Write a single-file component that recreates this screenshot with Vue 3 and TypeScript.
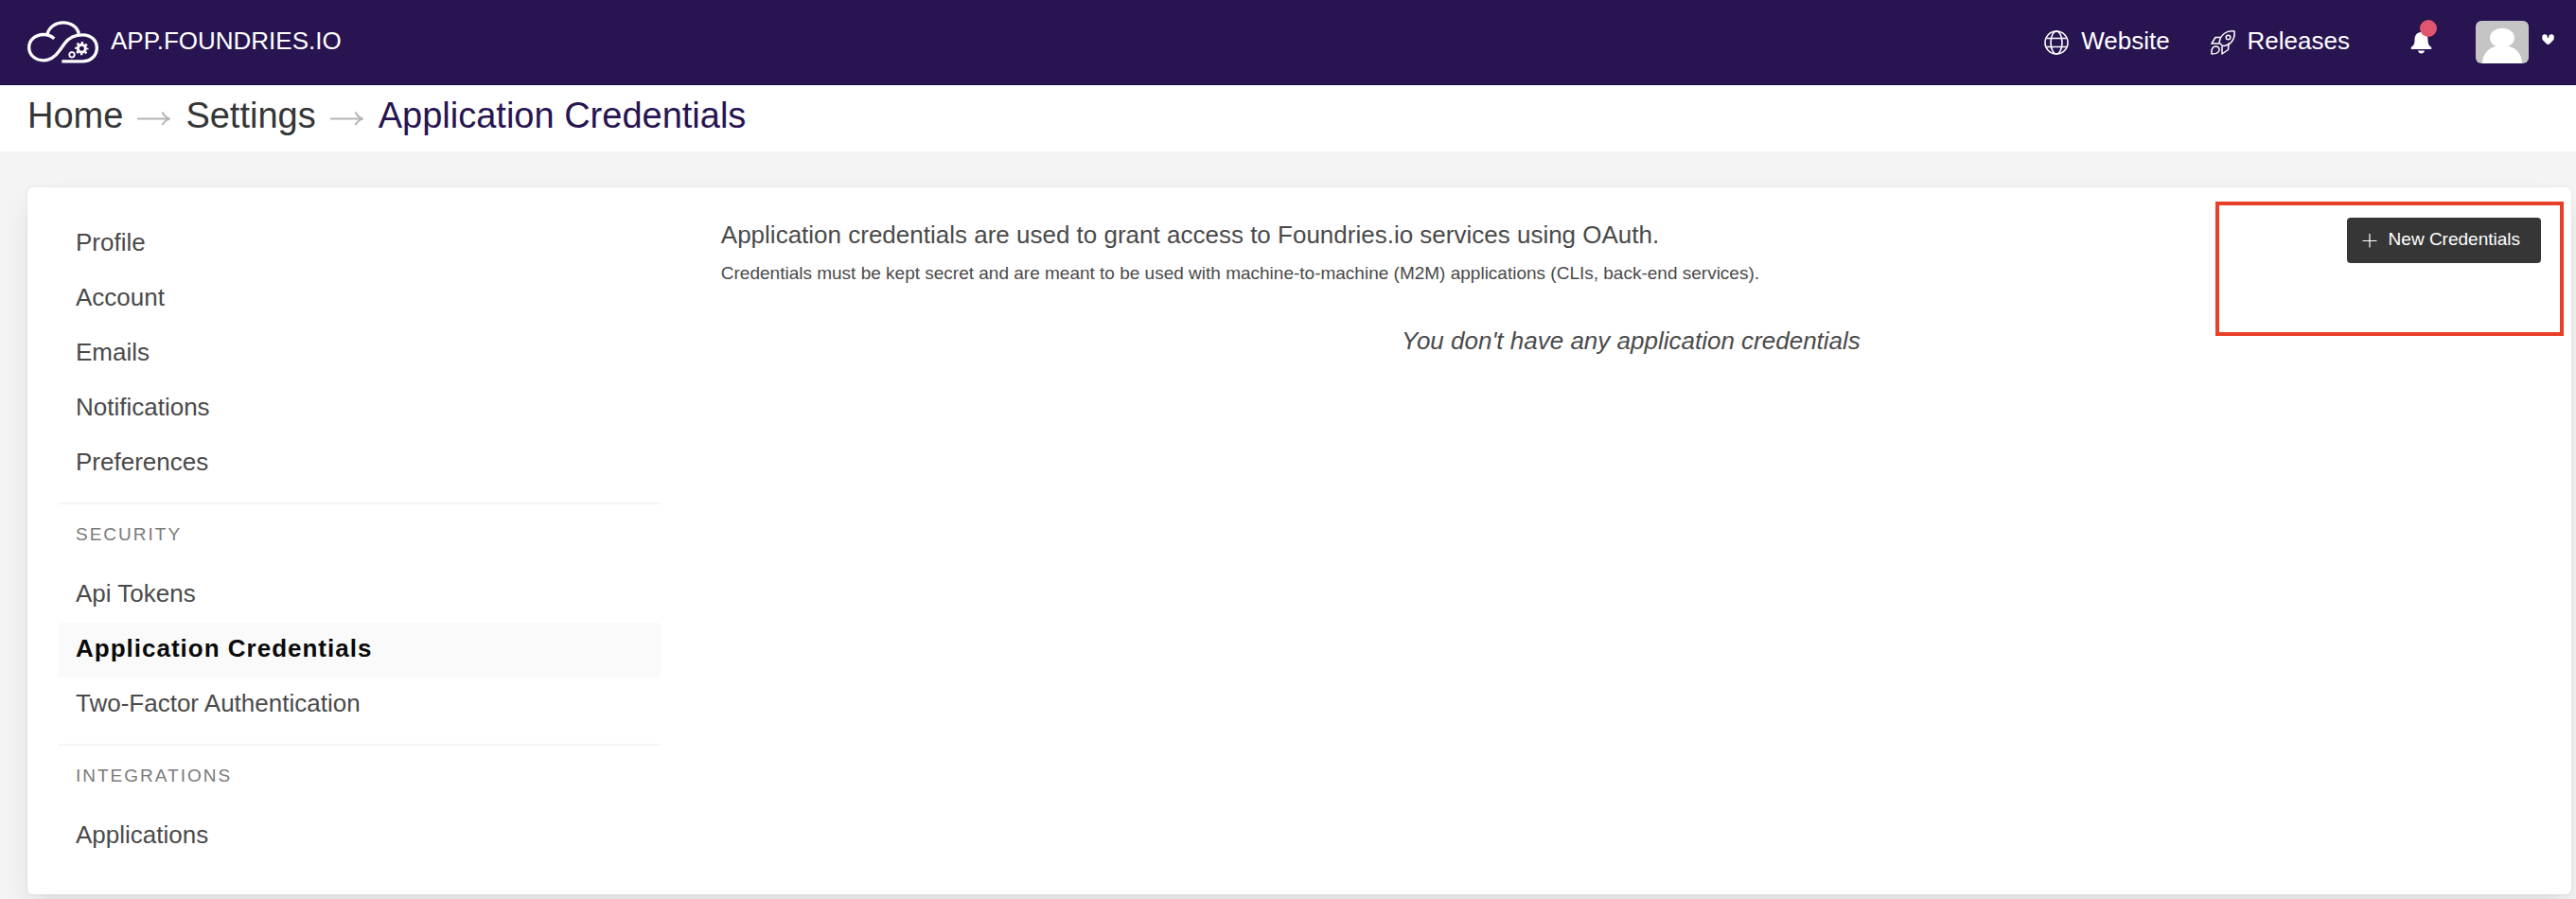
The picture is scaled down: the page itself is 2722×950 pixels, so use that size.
<script setup lang="ts">
interface NavItem {
  label: string
  active?: boolean
}

interface NavSection {
  heading?: string
  items: NavItem[]
}

const sections: NavSection[] = [
  {
    items: [
      { label: 'Profile' },
      { label: 'Account' },
      { label: 'Emails' },
      { label: 'Notifications' },
      { label: 'Preferences' },
    ],
  },
  {
    heading: 'Security',
    items: [
      { label: 'Api Tokens' },
      { label: 'Application Credentials', active: true },
      { label: 'Two-Factor Authentication' },
    ],
  },
  {
    heading: 'Integrations',
    items: [{ label: 'Applications' }],
  },
]

const crumbs: string[] = ['Home', 'Settings', 'Application Credentials']
</script>

<template>
  <div class="page">
    <header class="topbar">
      <a class="brand" href="#">
        <svg class="brand-logo" viewBox="87 68 225 134" fill="none" stroke="#fff" aria-hidden="true">
          <g stroke-width="10">
            <path d="M172 124C161 113 149 111 138 111C111 111 92 130 92 152C92 175 112 193 138 193C162 193 176 180 188 163L206 138C220 119 240 112 262 112C289 112 307 130 307 153C307 178 288 196 262 196H196" />
            <path d="M150 110C155 88 176 73 200 73C225 73 246 88 250 109" />
          </g>
          <circle cx="259" cy="155" r="12" stroke-width="9" />
          <circle cx="259" cy="155" r="18" stroke-width="7" pathLength="16" stroke-dasharray="1 1" stroke-dashoffset="0.5" />
          <circle cx="228" cy="175" r="8" stroke-width="5" />
          <circle cx="228" cy="175" r="10" stroke-width="3" pathLength="16" stroke-dasharray="1 1" stroke-dashoffset="0.5" />
        </svg>
        <span class="bar-text">APP.FOUNDRIES.IO</span>
      </a>

      <nav class="topnav" aria-label="Main">
        <a class="toplink" href="#">
          <svg class="icon" viewBox="0 0 26 26" fill="none" stroke="#fff" stroke-width="1.6" aria-hidden="true">
            <circle cx="13" cy="13" r="12" />
            <ellipse cx="13" cy="13" rx="6" ry="12" />
            <path d="M2.5 8.5H23.5M2.5 17.5H23.5" />
          </svg>
          <span class="bar-text">Website</span>
        </a>
        <a class="toplink" href="#">
          <svg class="icon" viewBox="0 0 26 26" fill="none" stroke="#fff" stroke-width="1.5" stroke-linejoin="round" aria-hidden="true">
            <path d="M25 1C17 0 10.5 4 9 13L12.5 16.5C21 16 26 10 25 1Z" />
            <circle cx="18.5" cy="7.5" r="2.3" />
            <path d="M11 7.5H5L1 14H9" />
            <path d="M12 17V25L18.5 20.5L19 13.5" />
            <path d="M1 25C.5 20 2 17 5 17C8 17 9.5 19 9 21C8.5 24 5 25 1 25Z" />
          </svg>
          <span class="bar-text">Releases</span>
        </a>
        <button class="bell" type="button" aria-label="Notifications">
          <svg class="bell-icon" viewBox="0 0 24 24" fill="#fff" aria-hidden="true">
            <path d="M11.5 1C6.5 1 4.500 5 4.500 9C4.500 14 3 15.500 1.300 16.500C.3 17.200 .2 19 1.500 19H21.500C22.800 19 22.700 17.200 21.700 16.500C20 15.500 18.500 14 18.500 9C18.500 5 16.500 1 11.500 1Z" />
            <path d="M8 20.500H15C14.500 22.500 13.500 23.500 11.500 23.500C9.500 23.500 8.500 22.500 8 20.500Z" />
          </svg>
          <span class="bell-dot"></span>
        </button>
        <button class="account" type="button" aria-label="Account menu">
          <svg class="avatar" viewBox="0 0 56 45" aria-hidden="true">
            <rect width="56" height="45" fill="#c5c5c5" />
            <ellipse cx="28" cy="18" rx="13" ry="10.3" fill="#fff" />
            <path d="M7 45C7 34 15 26 28 26C41 26 49 34 49 45Z" fill="#fff" />
          </svg>
          <svg class="caret" viewBox="0 0 13 11" aria-hidden="true">
            <path d="M3 3V4.500L6.500 8L10 4.500V3" fill="none" stroke="#fff" stroke-width="5.5" stroke-linecap="round" stroke-linejoin="round" />
          </svg>
        </button>
      </nav>
    </header>

    <nav class="crumbs" aria-label="Breadcrumb">
      <template v-for="(crumb, i) in crumbs" :key="crumb">
        <svg v-if="i > 0" class="crumb-arrow" viewBox="0 0 36 16" fill="none" stroke="#b5b5b5" stroke-width="2" aria-hidden="true">
          <path d="M0 8.5H34" />
          <path d="M26.5 1.500C28.500 5.500 30.500 7.500 34.500 8.500C30.500 9.500 28.500 11.500 26.500 15" />
        </svg>
        <a class="crumb" :class="{ current: i === crumbs.length - 1 }" href="#">{{ crumb }}</a>
      </template>
    </nav>

    <div class="card">
      <nav class="side" aria-label="Settings">
        <section v-for="(section, i) in sections" :key="i" class="side-section">
          <h2 v-if="section.heading" class="side-heading">{{ section.heading }}</h2>
          <ul class="side-list">
            <li v-for="item in section.items" :key="item.label">
              <a class="side-link" :class="{ active: item.active }" href="#">{{ item.label }}</a>
            </li>
          </ul>
        </section>
      </nav>

      <main class="main">
        <div class="intro">
          <div>
            <p class="lead">Application credentials are used to grant access to Foundries.io services using OAuth.</p>
            <p class="note">Credentials must be kept secret and are meant to be used with machine-to-machine (M2M) applications (CLIs, back-end services).</p>
          </div>
          <div class="action">
            <button class="new-button" type="button">
              <svg class="plus" viewBox="0 0 16 16" stroke="#fff" stroke-width="1.2" aria-hidden="true">
                <path d="M8 1V15.5M.5 8.5H15.5" />
              </svg>
              <span>New Credentials</span>
            </button>
            <span class="highlight"></span>
          </div>
        </div>
        <p class="empty">You don't have any application credentials</p>
      </main>
    </div>
  </div>
</template>

<style>
body {
  margin: 0;
  background: #f4f4f4;
}
</style>

<style scoped>
.page {
  box-sizing: border-box;
  min-height: 100vh;
  padding-bottom: 5px;
  overflow: hidden;
  color: #4a4a4a;
  font-family: "Liberation Sans", Arial, Helvetica, sans-serif;
  font-size: 26px;
}

a {
  color: inherit;
  text-decoration: none;
}

button {
  padding: 0;
  border: 0;
  background: none;
  color: inherit;
  font: inherit;
  cursor: pointer;
}

p,
h2,
ul {
  margin: 0;
  padding: 0;
}

.topbar {
  box-sizing: border-box;
  display: flex;
  align-items: center;
  justify-content: space-between;
  height: 90px;
  padding: 0 23px 0 29px;
  border-bottom: 1px solid #1f0d47;
  background: #281451;
  color: #fff;
}

.brand,
.topnav,
.toplink,
.account {
  display: flex;
  align-items: center;
}

.brand {
  gap: 13px;
}

.brand-logo {
  width: 75px;
  height: 45px;
}

.bar-text {
  padding-bottom: 4px;
  line-height: 32px;
}

.toplink {
  gap: 13px;
  margin-right: 43px;
}

.icon {
  width: 26px;
  height: 26px;
}

.bell {
  position: relative;
  display: flex;
  margin: 0 45px 0 21px;
}

.bell-icon {
  width: 24px;
  height: 24px;
}

.bell-dot {
  position: absolute;
  top: -12px;
  right: -4px;
  width: 18px;
  height: 18px;
  border-radius: 50%;
  background: #e0566e;
}

.account {
  gap: 14px;
}

.avatar {
  width: 56px;
  height: 45px;
  border-radius: 6px;
}

.caret {
  width: 13px;
  height: 11px;
  margin-bottom: 6px;
}

.crumbs {
  box-sizing: border-box;
  display: flex;
  align-items: center;
  gap: 15px;
  height: 70px;
  padding: 0 29px;
  background: #fff;
  color: #363636;
  font-size: 38px;
}

.crumb {
  padding-bottom: 6px;
  line-height: 46px;
}

.crumb.current {
  color: #281451;
}

.crumb-arrow {
  width: 36px;
  height: 16px;
}

.card {
  display: grid;
  grid-template-columns: minmax(0, 1fr) minmax(0, 3.02fr);
  column-gap: 64px;
  margin: 38px 5px 0 29px;
  padding: 31px 32px 32px;
  border-radius: 6px;
  background: #fff;
  box-shadow: 0 16px 32px -4px rgba(10, 10, 10, 0.1), 0 0 0 2px rgba(10, 10, 10, 0.02);
}

.side-section + .side-section {
  margin-top: 12px;
  border-top: 2px solid #f5f5f5;
}

.side-heading {
  padding: 0 19px 3px;
  color: #7a7a7a;
  font-size: 19px;
  font-weight: 400;
  line-height: 64px;
  letter-spacing: 2px;
  text-transform: uppercase;
}

.side-list {
  list-style: none;
}

.side-link {
  display: block;
  padding: 0 19px 4px;
  border-radius: 4px;
  line-height: 54px;
}

.side-link.active {
  background: #fafafa;
  color: #0a0a0a;
  font-weight: 700;
  letter-spacing: 1px;
}

.intro {
  display: flex;
  justify-content: space-between;
  gap: 24px;
}

.lead {
  line-height: 38px;
}

.note {
  padding-top: 7px;
  font-size: 19px;
  line-height: 30px;
}

.action {
  position: relative;
  flex: none;
}

.new-button {
  box-sizing: border-box;
  display: flex;
  align-items: center;
  gap: 12px;
  height: 48px;
  margin-top: 1px;
  padding: 0 22px 0 16px;
  border-radius: 4px;
  background: #363636;
  color: #fff;
  font-size: 19px;
}

.new-button span {
  padding-bottom: 3px;
}

.plus {
  width: 16px;
  height: 16px;
}

.highlight {
  position: absolute;
  top: -16px;
  right: -24px;
  box-sizing: border-box;
  width: 368px;
  height: 142px;
  border: 4px solid #e93f26;
  pointer-events: none;
}

.empty {
  margin-top: 37px;
  font-style: italic;
  line-height: 38px;
  text-align: center;
}
</style>
